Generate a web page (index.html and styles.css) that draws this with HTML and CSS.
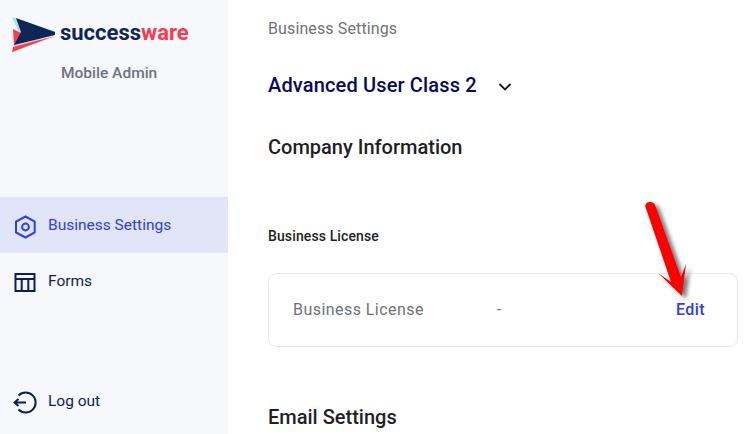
FILE: index.html
```html
<!DOCTYPE html>
<html lang="en">
<head>
<meta charset="utf-8">
<title>Business Settings</title>
<link rel="stylesheet" href="styles.css">
</head>
<body>
<div class="app">
  <aside class="sidebar">
    <div class="brand">
      <div class="logo-row">
        <svg class="logo-mark" width="44" height="36" viewBox="0 0 44 36">
          <polygon points="0,0 44,15 0,36 7,16" fill="#a9e2e4"/>
          <polygon points="1,12 9,16 2,29" fill="#fb3a4d"/>
          <polygon points="1,30 43,19 0,35" fill="#fb3a4d"/>
          <polygon points="4,1 43,15 43,18 2,28 9,15 " fill="#0e2556"/>
        </svg>
        <span class="logo-text">success<span class="logo-accent">ware</span></span>
      </div>
      <div class="brand-sub">Mobile Admin</div>
    </div>
    <nav class="nav">
      <a class="nav-item active">
        <svg width="24" height="24" viewBox="0 0 24 24" fill="none" stroke="#2e3ee6" stroke-width="2"><path d="M12.500 1.500 21.700 6.500v11L12.500 22.500 3 17.500v-11z"/><circle cx="12.500" cy="12" r="3.400"/></svg>
        <span>Business Settings</span>
      </a>
      <a class="nav-item">
        <svg width="24" height="24" viewBox="0 0 24 24" fill="none" stroke="#0d1c5c" stroke-width="2"><rect x="2.500" y="3" width="19" height="17"/><path d="M2.500 8H21.500M8.700 8V20M15.300 8V20"/></svg>
        <span>Forms</span>
      </a>
    </nav>
    <a class="nav-item logout">
      <svg width="24" height="24" viewBox="0 0 24 24" fill="none" stroke="#0d1c5c" stroke-width="2"><path d="M5.500 4.500A10 10 0 1 1 5.500 18.500"/><path d="M13 11.500H1.500M5.500 8l-4 3.500 4 3.500"/></svg>
      <span>Log out</span>
    </a>
  </aside>
  <main class="content">
    <div class="crumb">Business Settings</div>
    <div class="selector">
      <h1 class="selector-title">Advanced User Class 2</h1>
      <svg class="chevron" width="14" height="10" viewBox="0 0 14 10" fill="none" stroke="#1b1b1b" stroke-width="1.800"><path d="M1.500 2 7 7.500 12.500 2"/></svg>
    </div>
    <h2 class="section-title">Company Information</h2>
    <h3 class="sub-title">Business License</h3>
    <div class="card">
      <span class="card-label">Business License</span>
      <span class="card-value">-</span>
      <a class="card-edit">Edit</a>
    </div>
    <h2 class="section-title email">Email Settings</h2>
  </main>
  <svg class="arrow" width="60" height="110" viewBox="0 0 60 110">
    <defs><filter id="s" x="-50%" y="-20%" width="220%" height="140%"><feDropShadow dx="4" dy="3" stdDeviation="2.200" flood-color="#000" flood-opacity=".55"/></filter></defs>
    <path d="M5.500 12C4.500 9 7 7 10 7 13 7 15 9 15.500 11L41 82 46 69 42 101 18 78 31 87Z" fill="#fe0000" filter="url(#s)"/>
  </svg>
</div>
</body>
</html>
```
FILE: styles.css
```css
* { box-sizing: border-box; }
html, body { margin: 0; height: 100%; overflow: hidden; }
body { font-family: Roboto, "Liberation Sans", sans-serif; background: #fff; }
.app { position: relative; display: flex; width: 745px; height: 434px; overflow: hidden; }
.sidebar { width: 228px; flex: none; background: #f7f8fb; display: flex; flex-direction: column; }
.brand { height: 197px; padding: 17px 0 0 12px; }
.logo-row { display: flex; align-items: center; gap: 4px; height: 36px; }
.logo-mark { flex: none; }
.logo-text { font-size: 22px; font-weight: 700; line-height: 32px; margin-bottom: 4px; color: #10265a; }
.logo-accent { color: #fb3a4d; }
.brand-sub { margin: 10px 0 0 49px; font-size: 15.5px; font-weight: 500; line-height: 20px; color: #6f7280; }
.nav { display: flex; flex-direction: column; }
.nav-item { display: flex; align-items: center; gap: 11px; height: 56px; padding-left: 13px; font-size: 15.500px; line-height: 20px; color: #0d1c5c; }
.nav-item svg { margin-top: 4px; }
.nav-item.active { background: #e0e5f8; color: #2e3ee6; }
.logout { margin-top: auto; margin-bottom: 5px; }
.content { flex: 1; padding: 19px 0 0 40px; min-width: 0; }
.crumb { font-size: 16px; line-height: 20px; letter-spacing: .12px; color: #6f7178; }
.selector { display: flex; align-items: center; gap: 21px; margin-top: 34px; height: 24px; }
.selector-title { margin: 0; font-size: 20px; font-weight: 500; line-height: 24px; letter-spacing: .15px; color: #06095e; }
.chevron { margin-top: 3px; }
.section-title { margin: 0; font-size: 20px; font-weight: 500; line-height: 24px; color: #1e1f24; }
.selector + .section-title { margin-top: 38px; }
.sub-title { margin: 68px 0 0; font-size: 14px; font-weight: 500; line-height: 18px; letter-spacing: .12px; color: #1e1f24; }
.card { display: flex; align-items: center; width: 470px; height: 74px; margin-top: 28px; padding: 0 32px 2px 24px; border: 1px solid #e8e9ec; border-radius: 8px; font-size: 16px; color: #6f7178; letter-spacing: .45px; }
.card-label { width: 204px; }
.card-value { flex: 1; }
.card-edit { color: #2e3ee6; font-weight: 500; }
.section-title.email { margin-top: 58px; }
.arrow { position: absolute; left: 640px; top: 195px; pointer-events: none; }
```
